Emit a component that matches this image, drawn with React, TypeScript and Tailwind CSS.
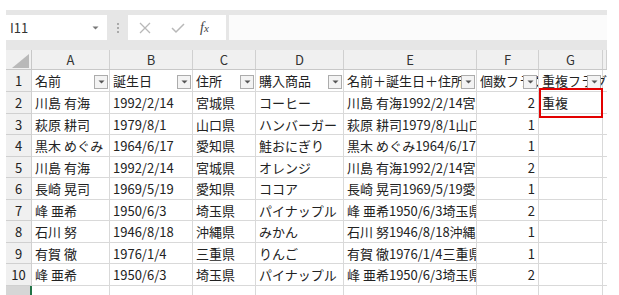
import React from "react";

const FONT = { fontFamily: '"Noto Sans CJK JP", "Noto Sans", sans-serif' };

const colW = ["w-[78px]", "w-[83px]", "w-[63px]", "w-[88px]", "w-[133px]", "w-[62px]", "w-[64px]", "w-[4px]"];
const letters = ["A", "B", "C", "D", "E", "F", "G", ""];

const headerRow = ["名前", "誕生日", "住所", "購入商品", "名前＋誕生日＋住所", "個数フラグ", "重複フラグ"];

const data: string[][] = [
  ["川島 有海", "1992/2/14", "宮城県", "コーヒー", "川島 有海1992/2/14宮城県", "2", "重複"],
  ["萩原 耕司", "1979/8/1", "山口県", "ハンバーガー", "萩原 耕司1979/8/1山口県", "1", ""],
  ["黒木 めぐみ", "1964/6/17", "愛知県", "鮭おにぎり", "黒木 めぐみ1964/6/17愛知県", "1", ""],
  ["川島 有海", "1992/2/14", "宮城県", "オレンジ", "川島 有海1992/2/14宮城県", "2", ""],
  ["長崎 晃司", "1969/5/19", "愛知県", "ココア", "長崎 晃司1969/5/19愛知県", "1", ""],
  ["峰 亜希", "1950/6/3", "埼玉県", "パイナップル", "峰 亜希1950/6/3埼玉県", "2", ""],
  ["石川 努", "1946/8/18", "沖縄県", "みかん", "石川 努1946/8/18沖縄県", "1", ""],
  ["有賀 徹", "1976/1/4", "三重県", "りんご", "有賀 徹1976/1/4三重県", "1", ""],
  ["峰 亜希", "1950/6/3", "埼玉県", "パイナップル", "峰 亜希1950/6/3埼玉県", "2", ""],
];

const rowH = ["h-[22px]", "h-[21px]", "h-[22px]", "h-[21px]", "h-[22px]", "h-[21px]", "h-[22px]", "h-[21px]", "h-[22px]"];

function FilterBtn() {
  return (
    <div className="absolute right-[1px] bottom-[2px] w-[14px] h-[14px] border border-[#acacac] bg-[#f3f3f3] flex items-center justify-center z-10">
      <svg width="7" height="4" viewBox="0 0 7 4">
        <path d="M0.5 0.5 L6.5 0.5 L3.5 3.5 Z" fill="#555" />
      </svg>
    </div>
  );
}

export default function App() {
  return (
    <div className="relative w-[619px] h-[295px] bg-white overflow-hidden text-[#222]" style={FONT}>
      <div className="absolute left-[6px] top-[10px] w-[601px] h-[285px] overflow-hidden flex flex-col">
        {/* toolbar */}
        <div className="h-[40px] bg-[#e6e6e6] flex items-start pt-[5px] shrink-0">
          <div className="w-[101px] h-[25px] bg-white flex items-center justify-between pl-[4px] pr-[8px]">
            <span className="text-[13px] text-[#333] leading-none">I11</span>
            <svg width="7" height="4" viewBox="0 0 7 4">
              <path d="M0.5 0.5 L6.5 0.5 L3.5 3.5 Z" fill="#777" />
            </svg>
          </div>
          <div className="w-[21px] h-[25px] flex flex-col items-center justify-center gap-[2px]">
            <div className="w-[2px] h-[2px] bg-[#aaa]" />
            <div className="w-[2px] h-[2px] bg-[#aaa]" />
            <div className="w-[2px] h-[2px] bg-[#aaa]" />
          </div>
          <div className="w-[98px] h-[25px] bg-white flex items-center">
            <svg width="14" height="14" viewBox="0 0 14 14" className="ml-[10px]">
              <path d="M2 2 L12 12 M12 2 L2 12" stroke="#b8b8b8" strokeWidth="1.3" />
            </svg>
            <svg width="16" height="14" viewBox="0 0 16 14" className="ml-[18px]">
              <path d="M2 7 L6 11 L14 3" stroke="#b8b8b8" strokeWidth="1.5" fill="none" />
            </svg>
            <span className="ml-[14px] text-[14px] italic text-[#444] leading-none" style={{ fontFamily: '"Liberation Serif", serif' }}>
              f<span className="text-[11px]">x</span>
            </span>
          </div>
          <div className="ml-[3px] flex-1 h-[25px] bg-[#fbfbfb]" />
        </div>

        {/* column headers */}
        <div className="flex h-[20px] shrink-0 bg-[#f0f0f0] border-b border-[#c8c8c8]">
          <div className="w-[26px] h-full border-r border-[#c8c8c8] relative">
            <svg className="absolute right-[2px] bottom-[1px]" width="17" height="14" viewBox="0 0 17 14">
              <path d="M17 0 L17 14 L0 14 Z" fill="#b9b9b9" />
            </svg>
          </div>
          {letters.map((l, i) => (
            <div key={i} className={`${colW[i]} shrink-0 h-full border-r border-[#d0d0d0] flex items-center justify-center text-[13px] text-[#333] leading-none`}>
              {l}
            </div>
          ))}
        </div>

        {/* row 1 */}
        <div className="flex h-[22px] shrink-0">
          <div className="w-[26px] shrink-0 bg-[#f0f0f0] border-r border-b border-[#d0d0d0] flex items-center justify-center text-[13px] leading-none">1</div>
          {headerRow.map((t, i) => (
            <div key={i} className={`${colW[i]} shrink-0 relative border-r border-b border-[#d9d9d9] flex items-center pl-[3px] text-[13px] whitespace-nowrap ${i === 6 ? "overflow-visible" : "overflow-hidden"}`}>
              <span className="leading-none">{t}</span>
              <FilterBtn />
            </div>
          ))}
          <div className={`${colW[7]} shrink-0 border-b border-[#d9d9d9]`} />
        </div>

        {data.map((r, ri) => (
          <div key={ri} className={`flex ${rowH[ri]} shrink-0`}>
            <div className="w-[26px] shrink-0 bg-[#f0f0f0] border-r border-b border-[#d0d0d0] flex items-center justify-center text-[13px] leading-none">{ri + 2}</div>
            {r.map((t, i) => (
              <div key={i} className={`${colW[i]} shrink-0 border-r border-b border-[#d9d9d9] flex items-center text-[13px] whitespace-nowrap overflow-hidden ${i === 5 ? "justify-end pr-[3px]" : "pl-[3px]"}`}>
                <span className="leading-none">{t}</span>
              </div>
            ))}
            <div className={`${colW[7]} shrink-0 border-b border-[#d9d9d9]`} />
          </div>
        ))}

        {/* row 11 partial */}
        <div className="flex h-[22px] shrink-0">
          <div className="w-[26px] shrink-0 bg-[#d6d6d6] border-r-2 border-[#217346]" />
          {colW.map((w, i) => (
            <div key={i} className={`${w} shrink-0 ${i < 7 ? "border-r" : ""} border-[#d9d9d9]`} />
          ))}
        </div>
      </div>

      {/* annotation */}
      <div className="absolute left-[539px] top-[88px] w-[64px] h-[30px] border-2 border-[#e30000] pointer-events-none z-20" />
    </div>
  );
}
